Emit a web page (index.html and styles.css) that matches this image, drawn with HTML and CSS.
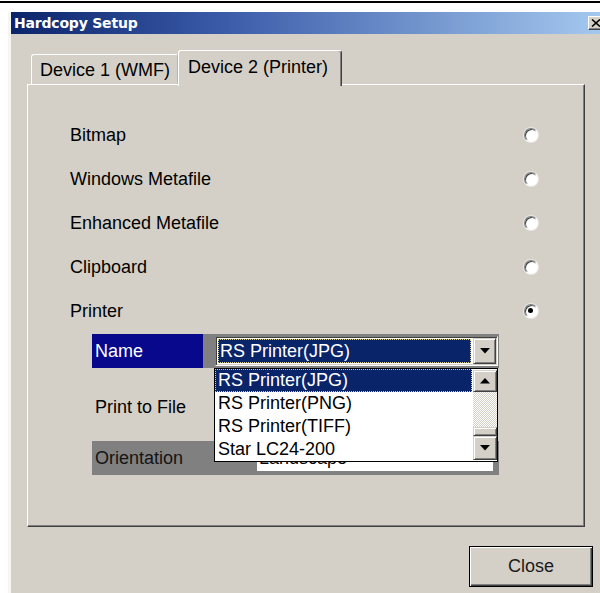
FILE: index.html
```html
<!DOCTYPE html>
<html lang="en">
<head>
<meta charset="utf-8">
<title>Hardcopy Setup</title>
<link rel="stylesheet" href="styles.css">
</head>
<body>
<div class="page">
  <div class="topline"></div>
  <div class="window">
    <div class="titlebar">
      <span class="title">Hardcopy Setup</span>
      <span class="xbtn">
        <svg width="10" height="8" viewBox="0 0 10 8"><path d="M1 0.5 L9 7.5 M9 0.5 L1 7.5" stroke="#000" stroke-width="1.6"/></svg>
      </span>
    </div>
    <div class="dialog-body">
      <div class="tabs">
        <div class="tab">Device 1 (WMF)</div>
        <div class="tab active">Device 2 (Printer)</div>
      </div>
      <div class="panel">
        <div class="options">
          <div class="option"><span>Bitmap</span><span class="radio"></span></div>
          <div class="option"><span>Windows Metafile</span><span class="radio"></span></div>
          <div class="option"><span>Enhanced Metafile</span><span class="radio"></span></div>
          <div class="option"><span>Clipboard</span><span class="radio"></span></div>
          <div class="option"><span>Printer</span><span class="radio checked"></span></div>
        </div>
        <div class="printer">
          <div class="prow prow-name">
            <span class="plabel plabel-sel">Name</span>
            <div class="combo">
              <div class="combo-value">RS Printer(JPG)</div>
              <span class="sbtn"><svg width="10" height="6" viewBox="0 0 10 6"><path d="M0 0 H10 L5 5.5 Z" fill="#000"/></svg></span>
            </div>
          </div>
          <div class="prow prow-file">
            <span class="plabel">Print to File</span>
          </div>
          <div class="prow prow-orient">
            <span class="plabel">Orientation</span>
            <div class="field">Landscape</div>
          </div>
          <div class="listbox">
            <div class="items">
              <div class="item item-sel">RS Printer(JPG)</div>
              <div class="item">RS Printer(PNG)</div>
              <div class="item">RS Printer(TIFF)</div>
              <div class="item">Star LC24-200</div>
            </div>
            <div class="scrollbar">
              <span class="sbtn sb-up"><svg width="10" height="6" viewBox="0 0 10 6"><path d="M0 5.5 H10 L5 0 Z" fill="#000"/></svg></span>
              <span class="track"></span>
              <span class="thumb"></span>
              <span class="sbtn sb-down"><svg width="10" height="6" viewBox="0 0 10 6"><path d="M0 0 H10 L5 5.5 Z" fill="#000"/></svg></span>
            </div>
          </div>
        </div>
      </div>
      <div class="actions">
        <button class="btn" type="button">Close</button>
      </div>
    </div>
  </div>
</div>
</body>
</html>
```
FILE: styles.css
```css
* { box-sizing: border-box; }

html, body {
  margin: 0;
  padding: 0;
  background: #fff;
}

.page {
  width: 600px;
  height: 593px;
  overflow: hidden;
  padding-top: 1px;
  background: #fff;
  font-family: "Liberation Sans", Arial, sans-serif;
  font-size: 18px;
  color: #000;
}

.topline {
  height: 2px;
  background: #000;
}

.window {
  margin: 9px 0 0 8px;
  width: 600px;
  height: 590px;
  background: #d4d0c8;
  border-left: 3px solid #f6f5f2;
}

/* caption bar */
.titlebar {
  height: 22px;
  display: flex;
  align-items: center;
  justify-content: space-between;
  padding: 0 4px 0 3px;
  background: linear-gradient(to right, #0a246a 0%, #3a5aa8 35%, #a6caf0 100%);
}

.title {
  font-family: "DejaVu Sans", Verdana, sans-serif;
  font-weight: bold;
  font-size: 14px;
  color: #fff;
  letter-spacing: -0.2px;
}

.xbtn {
  width: 16px;
  height: 14px;
  display: flex;
  align-items: center;
  justify-content: center;
  background: #d4d0c8;
  border: 1px solid;
  border-color: #fff #404040 #404040 #fff;
  box-shadow: inset -1px -1px #808080;
}

.dialog-body {
  padding: 16px 15px 0 16px;
}

/* tab strip */
.tabs {
  display: flex;
  align-items: flex-end;
  padding-left: 4px;
  height: 34px;
  position: relative;
  z-index: 1;
}

.tab {
  height: 30px;
  width: 147px;
  padding-left: 8px;
  display: flex;
  align-items: center;
  border: 1px solid;
  border-bottom: none;
  border-color: #fff #b8b5ae #fff #fff;
  border-radius: 3px 3px 0 0;
  background: #d4d0c8;
  margin-bottom: 0;
  line-height: 1;
}

.tab.active {
  height: 36px;
  width: 164px;
  padding-left: 9px;
  padding-bottom: 4px;
  margin-bottom: -2px;
  border-color: #fff #404040 #fff #fff;
  box-shadow: inset -1px 0 #808080;
}

/* tab page */
.panel {
  width: 558px;
  height: 443px;
  border: 1px solid;
  border-color: #fff #404040 #404040 #fff;
  box-shadow: inset -1px -1px #808080;
}

.options {
  padding: 28px 0 0 42px;
  width: 510px;
}

.option {
  height: 44px;
  display: flex;
  align-items: center;
  justify-content: space-between;
}

.radio {
  width: 14px;
  height: 14px;
  border-radius: 50%;
  background: #fff;
  border: 1px solid;
  border-color: #808080 #fff #fff #808080;
  box-shadow: inset 1px 1px #404040, 0 0 0 1px #e8e6e2;
  position: relative;
}

.radio.checked::after {
  content: "";
  position: absolute;
  left: 3px;
  top: 3px;
  width: 5px;
  height: 5px;
  border-radius: 50%;
  background: #000;
}

/* printer settings block */
.printer {
  position: relative;
  margin: 1px 0 0 64px;
  width: 407px;
}

.prow {
  display: flex;
  align-items: center;
}

.prow-name {
  height: 34px;
  background: #808080;
}

.plabel {
  padding-left: 3px;
  line-height: 22px;
}

.plabel-sel {
  width: 111px;
  height: 34px;
  display: flex;
  align-items: center;
  background: #08088c;
  color: #fff;
}

.combo {
  margin-left: 12px;
  width: 283px;
  height: 30px;
  display: flex;
  align-items: stretch;
  padding: 1px;
  background: #fff;
  border: 1px solid;
  border-color: #808080 #fff #fff #808080;
  box-shadow: inset 1px 1px #404040, inset -1px -1px #d4d0c8;
}

.combo-value {
  flex: 1;
  margin: 1px 2px 1px 1px;
  padding-left: 2px;
  display: flex;
  align-items: center;
  background: #0a246a;
  color: #fff;
  outline: 1px dotted #d8d08a;
  outline-offset: -1px;
}

.sbtn {
  width: 23px;
  display: flex;
  align-items: center;
  justify-content: center;
  background: #d4d0c8;
  border: 1px solid;
  border-color: #d4d0c8 #404040 #404040 #d4d0c8;
  box-shadow: inset 1px 1px #fff, inset -1px -1px #808080;
}

.prow-file {
  height: 73px;
  align-items: flex-start;
  padding-top: 28px;
}

.prow-orient {
  height: 34px;
  background: #808080;
  color: #141414;
}

.prow-orient .plabel {
  width: 165px;
}

.field {
  width: 236px;
  height: 26px;
  background: #fff;
  padding-left: 2px;
  line-height: 26px;
  color: #000;
}

/* open drop-down list */
.listbox {
  position: absolute;
  left: 122px;
  top: 34px;
  width: 284px;
  height: 94px;
  display: flex;
  background: #fff;
  border: 1px solid #000;
  z-index: 2;
}

.items {
  flex: 1;
}

.item {
  height: 23px;
  line-height: 23px;
  padding-left: 3px;
}

.item-sel {
  margin-right: 1px;
  background: #0a246a;
  color: #fff;
  outline: 1px dotted #d8d08a;
  outline-offset: -1px;
}

.scrollbar {
  width: 24px;
  display: flex;
  flex-direction: column;
  padding-top: 1px;
}

.scrollbar .sbtn {
  width: 24px;
}

.sb-up { height: 22px; }

.track {
  height: 35px;
  background: repeating-conic-gradient(#fff 0 25%, #d4d0c8 0 50%) 0 0 / 2px 2px;
}

.thumb {
  height: 9px;
  background: #d4d0c8;
  border: 1px solid;
  border-color: #d4d0c8 #404040 #404040 #d4d0c8;
  box-shadow: inset 1px 1px #fff, inset -1px -1px #808080;
}

.sb-down { height: 24px; }

/* buttons */
.actions {
  display: flex;
  justify-content: flex-end;
  margin-top: 19px;
}

.btn {
  width: 124px;
  height: 41px;
  font-family: "Liberation Sans", Arial, sans-serif;
  font-size: 18px;
  color: #1a1a1a;
  background: #d4d0c8;
  border: 1px solid #000;
  box-shadow: inset 1px 1px #fff, inset -1px -1px #404040, inset -2px -2px #808080;
  padding: 0;
}
```
